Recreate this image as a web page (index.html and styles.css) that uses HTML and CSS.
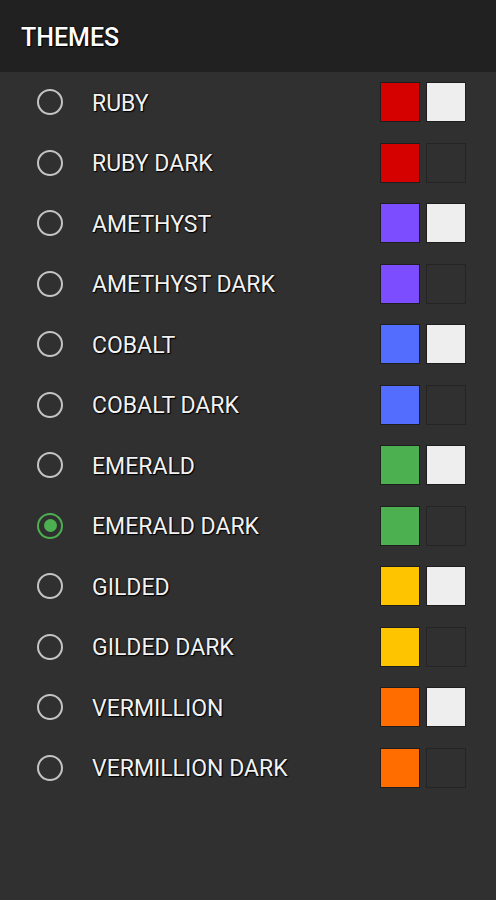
FILE: index.html
```html
<!DOCTYPE html>
<html>
<head>
<meta charset="utf-8">
<link rel="stylesheet" href="styles.css">
</head>
<body>
<header class="bar"><h1 class="title">THEMES</h1></header>
<ul class="list">
  <li class="row"><span class="radio"></span><span class="name">RUBY</span><span class="sw c-red"></span><span class="sw light"></span></li>
  <li class="row"><span class="radio"></span><span class="name">RUBY DARK</span><span class="sw c-red"></span><span class="sw dark"></span></li>
  <li class="row"><span class="radio"></span><span class="name">AMETHYST</span><span class="sw c-purple"></span><span class="sw light"></span></li>
  <li class="row"><span class="radio"></span><span class="name">AMETHYST DARK</span><span class="sw c-purple"></span><span class="sw dark"></span></li>
  <li class="row"><span class="radio"></span><span class="name">COBALT</span><span class="sw c-blue"></span><span class="sw light"></span></li>
  <li class="row"><span class="radio"></span><span class="name">COBALT DARK</span><span class="sw c-blue"></span><span class="sw dark"></span></li>
  <li class="row"><span class="radio"></span><span class="name">EMERALD</span><span class="sw c-green"></span><span class="sw light"></span></li>
  <li class="row"><span class="radio on"></span><span class="name">EMERALD DARK</span><span class="sw c-green"></span><span class="sw dark"></span></li>
  <li class="row"><span class="radio"></span><span class="name">GILDED</span><span class="sw c-gold"></span><span class="sw light"></span></li>
  <li class="row"><span class="radio"></span><span class="name">GILDED DARK</span><span class="sw c-gold"></span><span class="sw dark"></span></li>
  <li class="row"><span class="radio"></span><span class="name">VERMILLION</span><span class="sw c-orange"></span><span class="sw light"></span></li>
  <li class="row"><span class="radio"></span><span class="name">VERMILLION DARK</span><span class="sw c-orange"></span><span class="sw dark"></span></li>
</ul>
</body>
</html>
```
FILE: styles.css
```css
html, body {
  margin: 0;
  padding: 0;
  background: #303030;
  height: 100%;
}
body {
  font-family: Roboto, "Liberation Sans", sans-serif;
  color: #f2f2f2;
}
.bar {
  height: 72px;
  background: #212121;
  display: flex;
  align-items: center;
  padding: 2px 0 0 21px;
  box-sizing: border-box;
}
.title {
  margin: 0;
  font-size: 25px;
  font-weight: 500;
  color: #ffffff;
  text-shadow: 0 0 2px #000, 1px 1px 1px #000;
}
.list {
  list-style: none;
  margin: 0;
  padding: 0;
}
.row {
  height: 60.5px;
  display: flex;
  align-items: center;
  padding: 0 30px 0 37px;
  box-sizing: border-box;
}
.radio {
  width: 26px;
  height: 26px;
  box-sizing: border-box;
  border: 2.5px solid #c4c4c4;
  border-radius: 50%;
  display: flex;
  align-items: center;
  justify-content: center;
  flex: none;
}
.radio.on {
  border-color: #4caf50;
}
.radio.on::after {
  content: "";
  width: 13px;
  height: 13px;
  border-radius: 50%;
  background: #4caf50;
}
.name {
  margin-left: 29px;
  padding-top: 2px;
  font-size: 23px;
  flex: 1;
  text-shadow: 0 0 2px #000, 1px 1px 1px #000;
}
.sw {
  width: 40px;
  height: 40px;
  box-sizing: border-box;
  border: 1px solid #1e1e1e;
  flex: none;
}
.sw + .sw {
  margin-left: 6px;
}
.c-red { background: #d50000; }
.c-purple { background: #7c4dff; }
.c-blue { background: #536dfe; }
.c-green { background: #4caf50; }
.c-gold { background: #ffc400; }
.c-orange { background: #ff6d00; }
.light { background: #eeeeee; }
.dark { background: #303030; border-color: #242424; }
```
